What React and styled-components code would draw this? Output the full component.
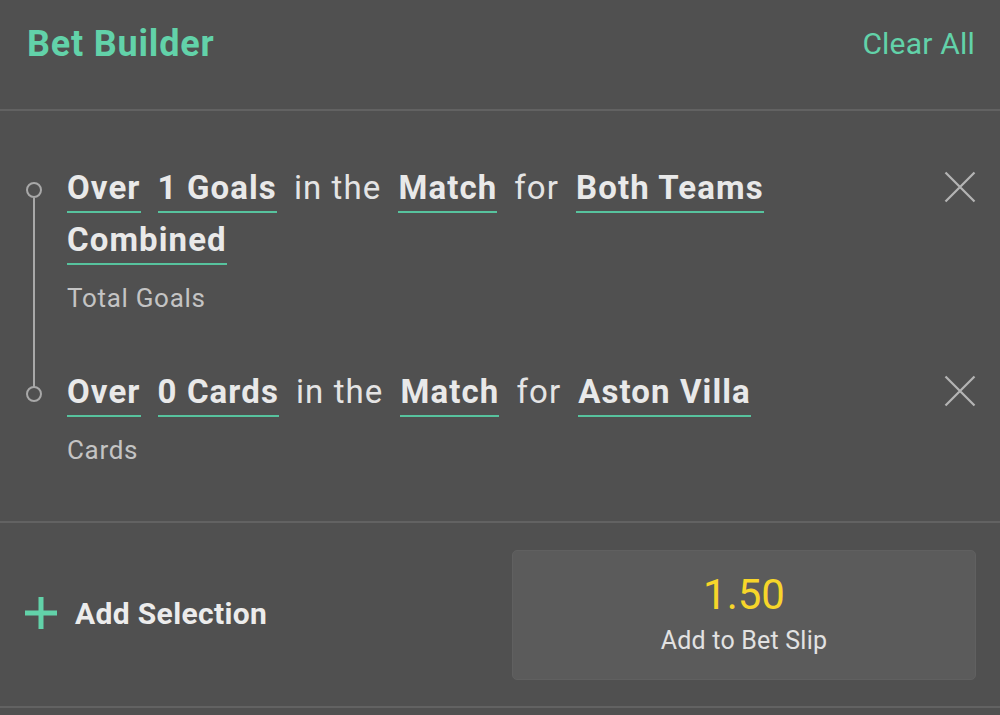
import React from "react";
import styled, { createGlobalStyle } from "styled-components";

const GlobalStyle = createGlobalStyle`
  html, body {
    margin: 0;
    padding: 0;
    background: #505050;
  }
  body {
    font-family: Roboto, "Noto Sans", "Liberation Sans", sans-serif;
  }
`;

const Panel = styled.div`
  width: 1000px;
  height: 715px;
  background: #505050;
  overflow: hidden;
`;

const Header = styled.div`
  height: 111px;
  display: flex;
  align-items: flex-start;
  justify-content: space-between;
  padding: 22px 25px 0 27px;
  box-sizing: border-box;
  border-bottom: 2px solid #626262;
`;

const Title = styled.h1`
  margin: 0;
  font-size: 36px;
  font-weight: 700;
  letter-spacing: 0.8px;
  color: #62d2a9;
  line-height: 44px;
`;

const ClearAll = styled.button`
  background: none;
  border: 0;
  padding: 0;
  font-family: inherit;
  font-size: 30px;
  letter-spacing: 0.2px;
  color: #62d2a9;
  line-height: 44px;
  cursor: pointer;
`;

const Legs = styled.div`
  padding: 54px 24px 0 0;
  height: 412px;
  box-sizing: border-box;
  border-bottom: 2px solid #626262;
`;

const Leg = styled.div`
  display: grid;
  grid-template-columns: 67px 1fr 50px;
  margin-bottom: ${(p) => p.$gap || 0}px;
`;

const Rail = styled.div`
  position: relative;
`;

const Dot = styled.span`
  position: absolute;
  left: 26px;
  top: 17px;
  width: 12px;
  height: 12px;
  border: 2px solid #a8a8a8;
  border-radius: 50%;
  background: #505050;
  z-index: 1;
`;

const Line = styled.span`
  position: absolute;
  left: 33px;
  top: 33px;
  width: 2px;
  height: ${(p) => p.$h}px;
  background: #a8a8a8;
`;

const Sentence = styled.div`
  display: flex;
  flex-wrap: wrap;
  column-gap: 17px;
  row-gap: 4px;
  font-size: 33px;
  letter-spacing: 1.1px;
  color: #e6e6e6;
`;

const Pick = styled.span`
  font-weight: 700;
  color: #e9e9e9;
  border-bottom: 2px solid #57c39e;
  line-height: 46px;
  height: 46px;
`;

const Word = styled.span`
  font-weight: 400;
  color: #e4e4e4;
  line-height: 46px;
`;

const Market = styled.div`
  font-size: 26px;
  letter-spacing: 0.7px;
  color: #c4c4c4;
  margin-top: 18px;
`;

const Remove = styled.button`
  background: none;
  border: 0;
  padding: 0;
  width: 32px;
  height: 32px;
  margin-top: 6px;
  justify-self: end;
  cursor: pointer;
`;

const Footer = styled.div`
  height: 185px;
  display: flex;
  align-items: center;
  justify-content: space-between;
  padding: 0 24px 0 25px;
  box-sizing: border-box;
  border-bottom: 2px solid #626262;
`;

const AddSelection = styled.button`
  display: flex;
  align-items: center;
  gap: 18px;
  background: none;
  border: 0;
  padding: 0 0 3px;
  font-family: inherit;
  font-size: 30px;
  font-weight: 700;
  letter-spacing: 0.35px;
  color: #ececec;
  cursor: pointer;
`;

const SlipButton = styled.button`
  width: 464px;
  height: 130px;
  background: #5b5b5b;
  border: 1px solid #606060;
  border-radius: 5px;
  display: flex;
  flex-direction: column;
  align-items: center;
  justify-content: center;
  font-family: inherit;
  cursor: pointer;
  padding: 0;
`;

const Odds = styled.span`
  font-size: 42px;
  color: #f7d62a;
  line-height: 50px;
  margin-bottom: 3px;
`;

const SlipLabel = styled.span`
  font-size: 25px;
  letter-spacing: 0.2px;
  color: #e2e2e2;
  line-height: 36px;
`;

const CloseIcon = () => (
  <svg width="32" height="32" viewBox="0 0 32 32">
    <path d="M1.5 1.5 L30.5 30.5 M30.5 1.5 L1.5 30.5" stroke="#b4b4b4" strokeWidth="2.2" />
  </svg>
);

const PlusIcon = () => (
  <svg width="32" height="32" viewBox="0 0 32 32">
    <path d="M16 0 V32 M0 16 H32" stroke="#62d2a9" strokeWidth="5" />
  </svg>
);

const legs = [
  {
    parts: [
      ["Over", true],
      ["1 Goals", true],
      ["in the", false],
      ["Match", true],
      ["for", false],
      ["Both Teams", true],
      ["Combined", true],
    ],
    market: "Total Goals",
    line: 192,
    gap: 56,
  },
  {
    parts: [
      ["Over", true],
      ["0 Cards", true],
      ["in the", false],
      ["Match", true],
      ["for", false],
      ["Aston Villa", true],
    ],
    market: "Cards",
  },
];

export default function App() {
  return (
    <Panel>
      <GlobalStyle />
      <Header>
        <Title>Bet Builder</Title>
        <ClearAll>Clear All</ClearAll>
      </Header>
      <Legs>
        {legs.map((leg, i) => (
          <Leg key={i} $gap={leg.gap}>
            <Rail>
              <Dot />
              {leg.line && <Line $h={leg.line} />}
            </Rail>
            <div>
              <Sentence>
                {leg.parts.map(([text, bold], j) =>
                  bold ? <Pick key={j}>{text}</Pick> : <Word key={j}>{text}</Word>
                )}
              </Sentence>
              <Market>{leg.market}</Market>
            </div>
            <Remove aria-label="Remove">
              <CloseIcon />
            </Remove>
          </Leg>
        ))}
      </Legs>
      <Footer>
        <AddSelection>
          <PlusIcon />
          Add Selection
        </AddSelection>
        <SlipButton>
          <Odds>1.50</Odds>
          <SlipLabel>Add to Bet Slip</SlipLabel>
        </SlipButton>
      </Footer>
    </Panel>
  );
}
